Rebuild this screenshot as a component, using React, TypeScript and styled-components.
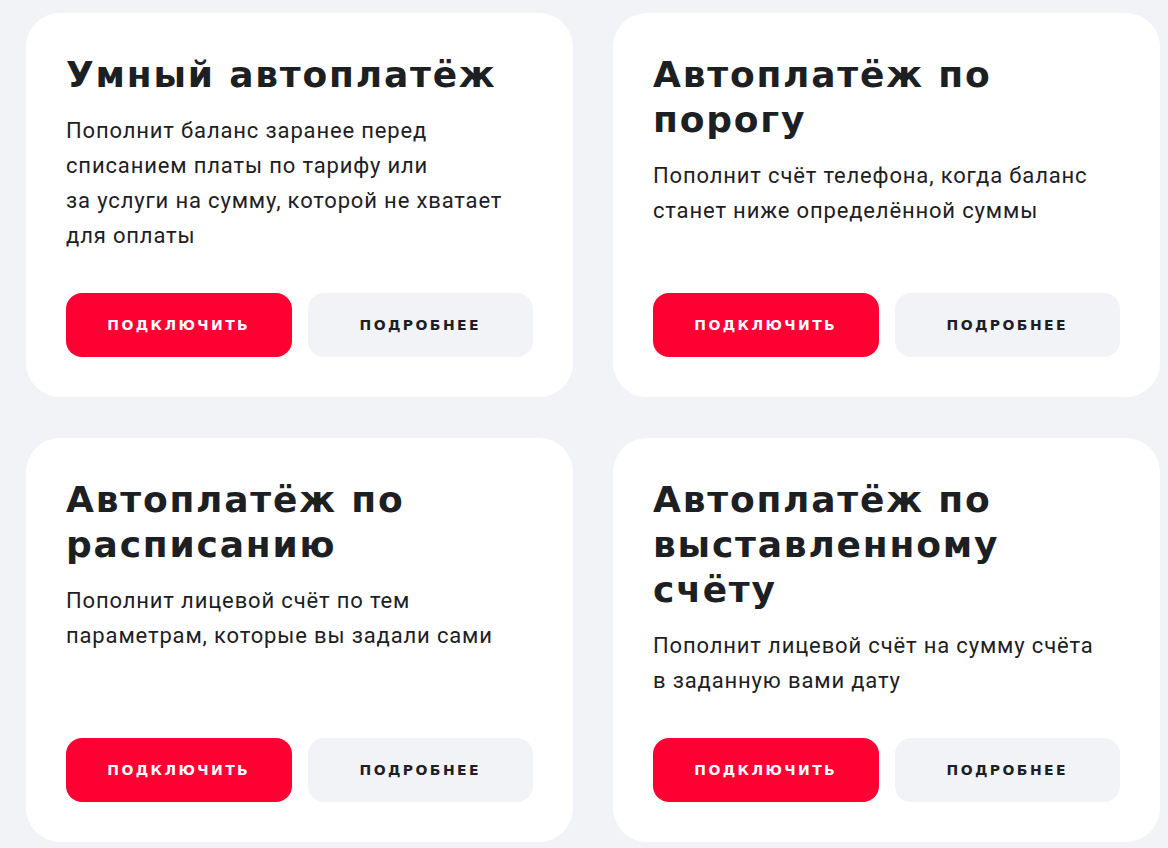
import React from 'react';
import styled, { createGlobalStyle } from 'styled-components';

type Plan = {
  title: string;
  text: string[];
};

const plans: Plan[] = [
  {
    title: 'Умный автоплатёж',
    text: [
      'Пополнит баланс заранее перед',
      'списанием платы по тарифу или',
      'за услуги на сумму, которой не хватает',
      'для оплаты',
    ],
  },
  {
    title: 'Автоплатёж по порогу',
    text: ['Пополнит счёт телефона, когда баланс', 'станет ниже определённой суммы'],
  },
  {
    title: 'Автоплатёж по расписанию',
    text: ['Пополнит лицевой счёт по тем', 'параметрам, которые вы задали сами'],
  },
  {
    title: 'Автоплатёж по выставленному счёту',
    text: ['Пополнит лицевой счёт на сумму счёта', 'в заданную вами дату'],
  },
];

function App() {
  return (
    <>
      <GlobalStyle />
      <Page>
        <CardGrid>
          {plans.map((plan) => (
            <Card key={plan.title}>
              <Title>{plan.title}</Title>
              <Description>
                {plan.text.map((line) => (
                  <span key={line}>{line}</span>
                ))}
              </Description>
              <Actions>
                <ActionButton $primary>подключить</ActionButton>
                <ActionButton>подробнее</ActionButton>
              </Actions>
            </Card>
          ))}
        </CardGrid>
      </Page>
    </>
  );
}

const GlobalStyle = createGlobalStyle`
  * {
    box-sizing: border-box;
  }

  body {
    margin: 0;
    background: #f2f3f7;
    font-family: Roboto, 'Liberation Sans', sans-serif;
    color: #1d2023;
  }
`;

const Page = styled.main`
  min-height: 100vh;
  padding: 13px 0 0 26px;
  background: #f2f3f7;
  overflow: hidden;
`;

const CardGrid = styled.div`
  display: grid;
  grid-template-columns: repeat(2, 547px);
  gap: 41px 40px;
`;

const Card = styled.section`
  display: flex;
  flex-direction: column;
  padding: 39px 40px 40px;
  border-radius: 34px;
  background: #ffffff;
`;

const Title = styled.h2`
  margin: 0;
  max-width: 450px;
  font-family: 'DejaVu Sans', sans-serif;
  font-size: 36px;
  font-weight: 700;
  line-height: 45px;
  letter-spacing: 1.8px;
  color: #1d2023;
`;

const Description = styled.p`
  display: flex;
  flex-direction: column;
  margin: 16px 0 0;
  font-family: Roboto, 'Liberation Sans', sans-serif;
  font-size: 22px;
  font-weight: 400;
  line-height: 35px;
  letter-spacing: 0.85px;
  color: #1d2023;
  white-space: nowrap;
`;

const Actions = styled.div`
  display: grid;
  grid-template-columns: 1fr 1fr;
  gap: 16px;
  margin-top: auto;
  padding-top: 40px;
`;

const ActionButton = styled.button<{ $primary?: boolean }>`
  height: 64px;
  border: none;
  border-radius: 16px;
  background: ${({ $primary }) => ($primary ? '#ff0032' : '#f2f3f7')};
  color: ${({ $primary }) => ($primary ? '#ffffff' : '#1d2023')};
  font-family: 'DejaVu Sans', sans-serif;
  font-size: 14px;
  font-weight: 700;
  letter-spacing: 2.4px;
  text-transform: uppercase;
  cursor: pointer;
`;

export default App;
